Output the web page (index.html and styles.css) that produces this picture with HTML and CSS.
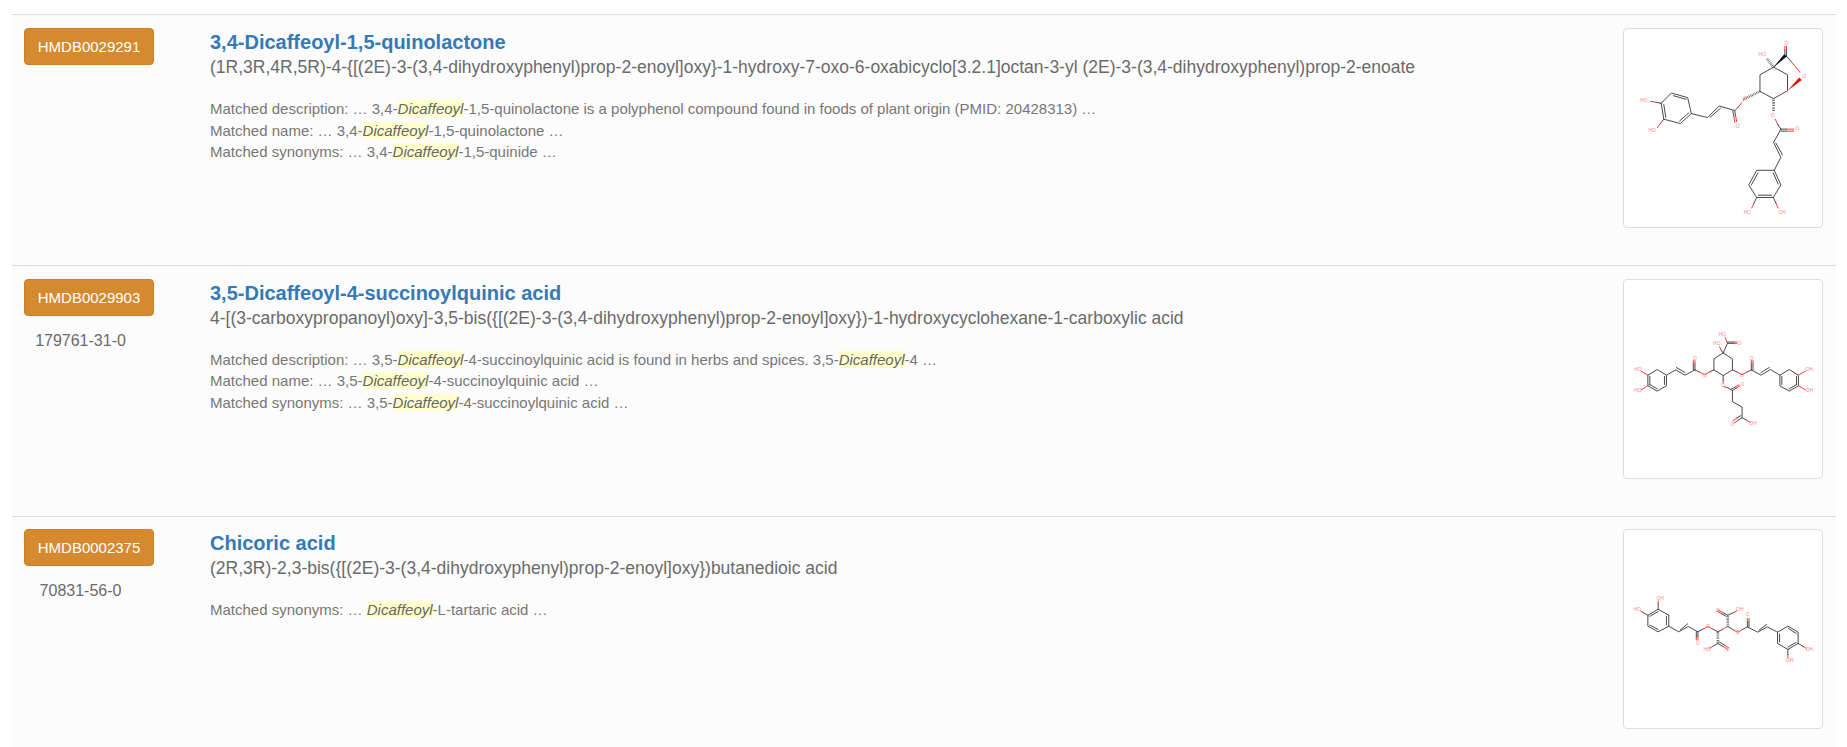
FILE: index.html
```html
<!DOCTYPE html>
<html lang="en">
<head>
<meta charset="utf-8">
<title>Search results</title>
<link rel="stylesheet" href="styles.css">
</head>
<body>
<div class="results">

<div class="row">
  <div class="ids"><a class="btn">HMDB0029291</a></div>
  <div class="main">
    <h2 class="name">3,4-Dicaffeoyl-1,5-quinolactone</h2>
    <div class="iupac">(1R,3R,4R,5R)-4-{[(2E)-3-(3,4-dihydroxyphenyl)prop-2-enoyl]oxy}-1-hydroxy-7-oxo-6-oxabicyclo[3.2.1]octan-3-yl (2E)-3-(3,4-dihydroxyphenyl)prop-2-enoate</div>
    <div class="matches">
      <div>Matched description: … 3,4-<em>Dicaffeoyl</em>-1,5-quinolactone is a polyphenol compound found in foods of plant origin (PMID: 20428313) …</div>
      <div>Matched name: … 3,4-<em>Dicaffeoyl</em>-1,5-quinolactone …</div>
      <div>Matched synonyms: … 3,4-<em>Dicaffeoyl</em>-1,5-quinide …</div>
    </div>
  </div>
  <div class="thumb">
    <svg class="mol" viewBox="70 40 597 597">
      <path class="bond" d="M182 264L213 233L262 247L273 295L240 325L190 312L182 264M219 241L257 252M265 293L238 317M190 268L196 306M273 295L322 307L357 272L404 286L406 300M330 306L361 279M404 286L414 276M480 228V178L521 155L563 178V226L521 250L480 228M521 155L558 120L574 138M543 342L534 328M543 342H560M543 348H560M543 342L521 382L543 427L523 466L470 466L446 510L470 548H520L543 510L523 466M528 384L548 420M454 510L474 474M475 541H515M535 508L520 474M470 548L462 565M520 548L528 565M182 264L166 261M190 312L180 325M398 288L401 302M555 120V104M560 120V104"/>
      <path class="red" d="M166 261L150 258M180 325L170 338M406 300L410 320M401 302L404 322M414 276L425 262M574 138L600 170M534 328L526 312M560 342H582M560 348H582M555 104V92M560 104V92M462 565L455 580M528 565L535 580"/>
      <path class="solid" d="M521 155L553 116L561 123Z"/>
      <path class="redfill" d="M563 226L598 186L606 194Z"/>
      <path class="hash" d="M480 228L428 254"/>
      <path class="hash" d="M521 250V290"/>
      <path class="hash" d="M521 155L500 128"/>
      <g class="atoms">
        <text x="130" y="259">HO</text><text x="155" y="352">HO</text><text x="436" y="255">O</text><text x="413" y="338">O</text><text x="487" y="122">HO</text><text x="560" y="89">O</text><text x="613" y="188">O</text><text x="519" y="304">O</text><text x="592" y="346">O</text><text x="442" y="598">HO</text><text x="547" y="598">OH</text>
      </g>
    </svg>
  </div>
</div>

<div class="row">
  <div class="ids"><a class="btn">HMDB0029903</a><div class="cas">179761-31-0</div></div>
  <div class="main">
    <h2 class="name">3,5-Dicaffeoyl-4-succinoylquinic acid</h2>
    <div class="iupac">4-[(3-carboxypropanoyl)oxy]-3,5-bis({[(2E)-3-(3,4-dihydroxyphenyl)prop-2-enoyl]oxy})-1-hydroxycyclohexane-1-carboxylic acid</div>
    <div class="matches">
      <div>Matched description: … 3,5-<em>Dicaffeoyl</em>-4-succinoylquinic acid is found in herbs and spices. 3,5-<em>Dicaffeoyl</em>-4 …</div>
      <div>Matched name: … 3,5-<em>Dicaffeoyl</em>-4-succinoylquinic acid …</div>
      <div>Matched synonyms: … 3,5-<em>Dicaffeoyl</em>-4-succinoylquinic acid …</div>
    </div>
  </div>
  <div class="thumb">
    <svg class="mol" viewBox="40 -63 597 597">
      <path class="bond" d="M339 157L367 175V208L339 225L311 208V175L339 157L352 128M352 128H370M352 124H370M311 208L297 215M367 208L382 215M254 208L268 215M254 208V190M249 208V190M254 208L224 224L196 208L168 224V256L140 272L112 256V224L140 207L168 224M224 216L198 201M162 228V252M140 265L117 252M118 228V252M424 208L410 215M424 208V190M429 208V190M424 208L453 224L482 207L510 224V256L538 272L566 256V224L538 207L510 224M453 216L478 201M516 228V252M538 265L561 252M560 228V252M339 225V240M353 262L367 270L380 262M362 267L376 259M367 270V304L396 320V352L384 360M392 346L379 354M396 352L412 361M339 157L333 148"/>
      <path class="red" d="M297 215L283 223L268 215M382 215L396 223L410 215M254 190V180M249 190V180M424 190V180M429 190V180M339 240V248M339 258L353 262M380 262L390 256M376 259L386 253M384 360L372 368M379 354L368 362M412 361L420 366M333 148L328 138M352 128L345 110M370 128H380M370 124H380M112 224L92 212M112 256L92 268M566 224L587 212M566 256L587 268"/>
      <g class="atoms">
        <text x="337" y="105">HO</text><text x="320" y="132">HO</text><text x="388" y="133">O</text><text x="254" y="177">O</text><text x="283" y="228">O</text><text x="424" y="177">O</text><text x="396" y="228">O</text><text x="339" y="259">O</text><text x="397" y="258">O</text><text x="367" y="376">O</text><text x="429" y="375">OH</text><text x="82" y="211">HO</text><text x="82" y="276">HO</text><text x="599" y="211">OH</text><text x="599" y="276">OH</text>
      </g>
    </svg>
  </div>
</div>

<div class="row">
  <div class="ids"><a class="btn">HMDB0002375</a><div class="cas">70831-56-0</div></div>
  <div class="main">
    <h2 class="name">Chicoric acid</h2>
    <div class="iupac">(2R,3R)-2,3-bis({[(2E)-3-(3,4-dihydroxyphenyl)prop-2-enoyl]oxy})butanedioic acid</div>
    <div class="matches">
      <div>Matched synonyms: … <em>Dicaffeoyl</em>-L-tartaric acid …</div>
    </div>
  </div>
  <div class="thumb">
    <svg class="mol" viewBox="40 -92 597 597">
      <path class="bond" d="M175 165L143 147L112 165V198L143 215L175 198V165M143 154L118 168M118 195L143 208M168 169V194M175 198L205 215L234 199L263 215L278 207M210 209L232 191M263 215V230M258 215V230M323 215L308 207M323 215L338 207M353 199L368 208M397 208L412 200V185M417 200V185M412 200L443 216L472 200L503 216V250L534 268L565 250V216L534 198L503 216M447 210L470 193M509 222V246M534 261L559 247M559 220L536 205M353 165L338 157M348 168L333 160M353 165L370 157M323 250L338 259M328 246L343 255M323 250L307 259M565 250L582 260M534 268V284M143 147V130M112 165L98 157"/>
      <path class="red" d="M263 230V240M258 230V240M278 207L293 199L308 207M338 207L353 199M368 208L383 216L397 208M412 185V175M417 185V175M338 157L323 149M333 160L320 153M370 157L380 152M338 259L353 268M343 255L356 263M307 259L297 265M582 260L590 265M534 284V293M143 130V122M98 157L90 152"/>
      <path class="hash" d="M353 199V167"/>
      <path class="hash" d="M323 215V248"/>
      <g class="atoms">
        <text x="80" y="153">HO</text><text x="149" y="118">OH</text><text x="263" y="255">O</text><text x="293" y="204">O</text><text x="383" y="221">O</text><text x="412" y="168">O</text><text x="323" y="154">O</text><text x="389" y="153">OH</text><text x="291" y="273">HO</text><text x="353" y="273">O</text><text x="599" y="273">OH</text><text x="539" y="306">OH</text>
      </g>
    </svg>
  </div>
</div>

</div>
</body>
</html>
```

FILE: styles.css
```css
* { box-sizing: border-box; }
html, body { margin: 0; background: #fff; }
body {
  padding: 14.49px 11px 0 12px;
  font-family: "Liberation Sans", Arial, sans-serif;
  color: #666;
  height: 747px;
  overflow: hidden;
}
.row {
  display: flex;
  height: 250.6px;
  padding: 12.6px 13px 0 12px;
  background: #fcfcfc;
  border-top: 1px solid #ddd;
}
.ids { width: 186px; flex: none; }
.btn {
  display: block;
  width: 130px;
  height: 37px;
  line-height: 35px;
  text-align: center;
  font-size: 15px;
  color: #fff;
  background: #d58a2f;
  border: 1px solid #c9802a;
  border-radius: 4px;
}
.cas {
  width: 130px;
  margin-top: 13px;
  text-align: center;
  font-size: 16px;
  line-height: 24px;
  padding-right: 17px;
  color: #6a6a6a;
}
.main { flex: 1; min-width: 0; }
.name {
  margin: 2.2px 0 0;
  font-size: 20px;
  line-height: 24px;
  font-weight: bold;
  color: #337ab7;
}
.iupac { font-size: 17.5px; line-height: 26.5px; color: #6a6a6a; }
.matches { margin-top: 17.5px; font-size: 15px; line-height: 21.43px; color: #777; }
.matches em { background: #ffc; font-style: italic; color: #666; }
.thumb {
  flex: none;
  width: 200px;
  height: 200px;
  background: #fff;
  border: 1px solid #ddd;
  border-radius: 4px;
  overflow: hidden;
}
.mol { display: block; width: 198px; height: 198px; }
.bond, .red, .hash { fill: none; stroke-linecap: round; }
.bond { stroke: #333; stroke-width: 2.7; }
.red { stroke: #f22; stroke-width: 2.7; }
.hash { stroke: #444; stroke-width: 8; stroke-dasharray: 2 3; stroke-linecap: butt; }
.solid { fill: #111; }
.redfill { fill: #f00; }
.atoms text { font-family: "Liberation Sans", Arial, sans-serif; font-size: 15px; fill: #f88; text-anchor: middle; }
```
